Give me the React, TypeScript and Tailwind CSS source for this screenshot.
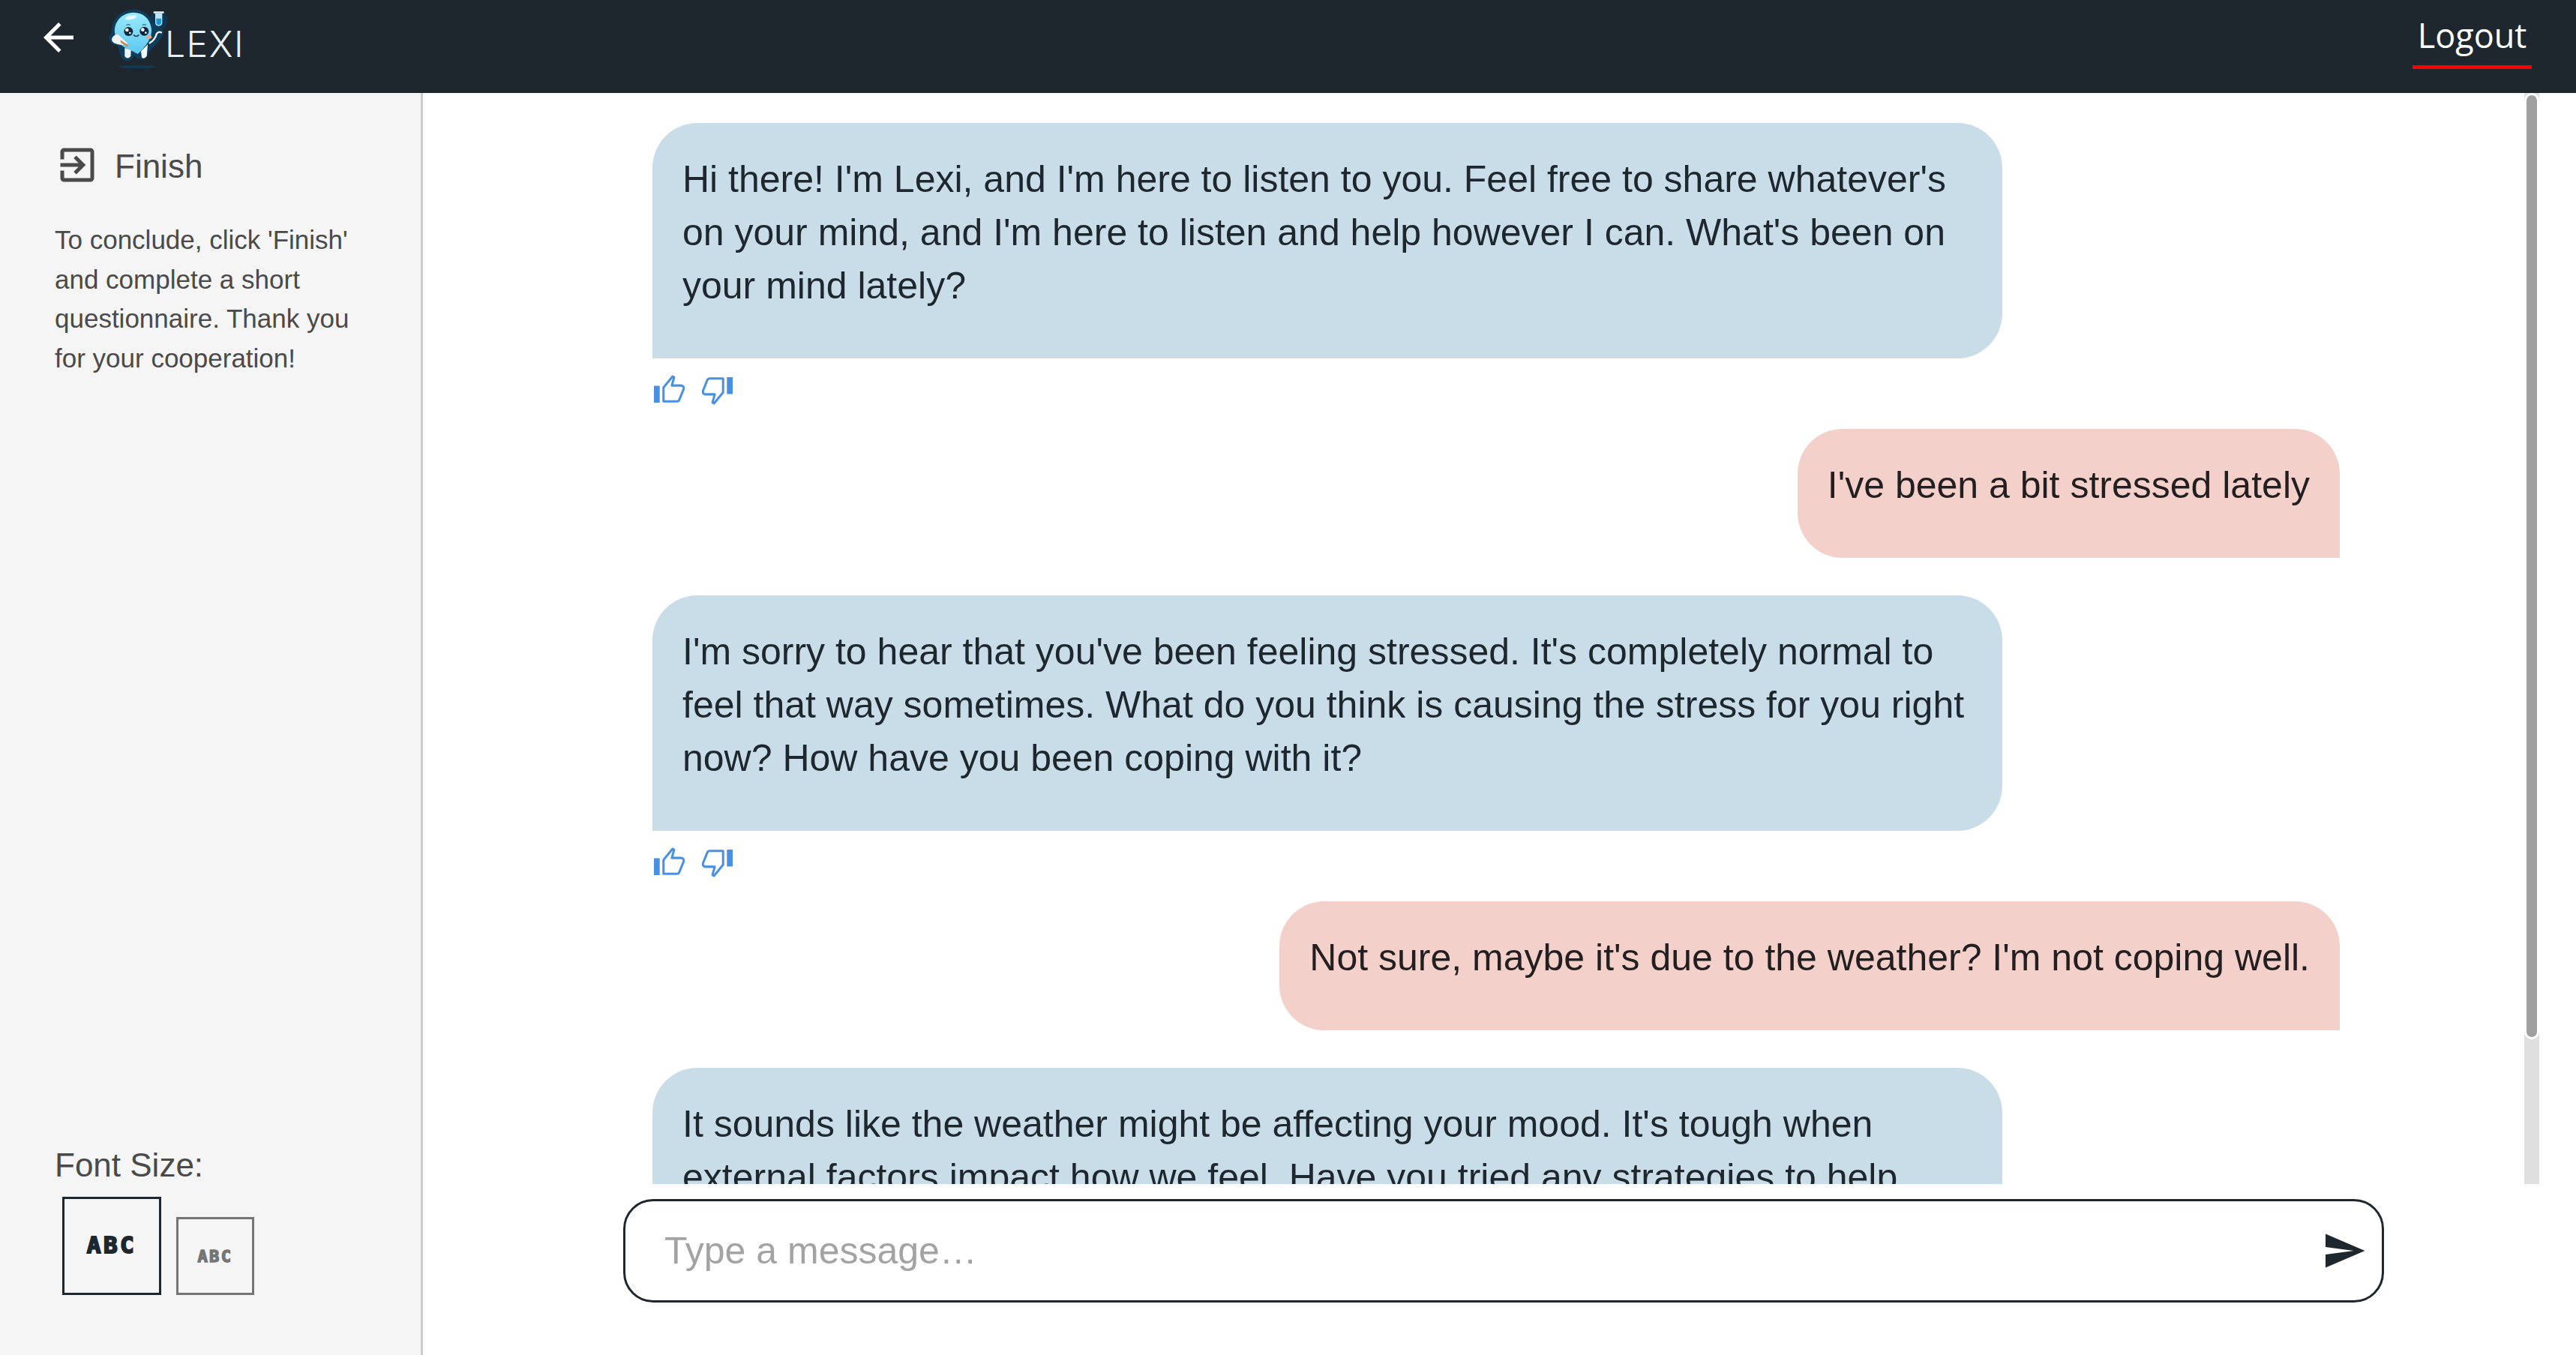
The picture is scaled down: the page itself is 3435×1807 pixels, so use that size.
import React from "react";

const sans = { fontFamily: '"Liberation Sans", Arial, sans-serif' };

function Thumb({ down = false }: { down?: boolean }) {
  return (
    <svg width="41" height="37" viewBox="0 0 122 110" className={down ? "mt-[3px] rotate-180" : ""} fill="none">
      <rect x="0" y="43" width="23" height="67" rx="1" fill="#4a90e2" />
      <path
        d="M38 50 L74 6 L80 10 L71 42 H106 Q120 42 118 56 L100 100 Q98 105 92 105 H38 Z"
        stroke="#4a90e2"
        strokeWidth="9"
        strokeLinejoin="round"
      />
    </svg>
  );
}

function Mascot() {
  return (
    <svg width="84" height="84" viewBox="70 30 252 252" fill="none">
      <defs>
        <linearGradient id="body" x1="0" y1="0" x2="0" y2="1">
          <stop offset="0" stopColor="#9aeafb" />
          <stop offset="1" stopColor="#5cc8ee" />
        </linearGradient>
      </defs>
      <ellipse cx="190" cy="267" rx="78" ry="6" fill="#123a55" />
      <circle cx="276" cy="82" r="36" fill="#0e3650" />
      <path
        d="M175 38 C115 38 84 90 88 130 C70 150 72 175 110 182 C118 190 118 225 135 240 C155 250 170 240 178 222 C190 240 225 245 235 215 C240 195 285 170 296 128 C290 105 260 100 250 85 C235 55 210 38 175 38 Z"
        fill="#0f3d5c"
      />
      <path
        d="M175 50 C125 50 96 92 100 130 C103 165 130 190 165 202 L192 216 C220 190 254 152 246 110 C240 75 215 50 175 50 Z"
        fill="url(#body)"
      />
      <ellipse cx="165" cy="70" rx="24" ry="8" fill="#e6fbff" transform="rotate(-12 165 70)" />
      <path d="M140 192 L165 200 L164 225 Q150 240 140 225 Z" fill="#eef6fb" />
      <path d="M205 205 L232 178 L228 225 Q218 238 208 230 Z" fill="#f4f9fc" />
      <path d="M92 148 Q110 128 122 146 L150 172 Q152 186 138 180 Q105 180 92 168 Q84 158 92 148 Z" fill="#eef3f7" />
      <path d="M122 160 L154 180 L150 188 L124 170 Z" fill="#c98a55" />
      <path d="M240 172 Q262 158 268 134 Q276 124 286 130" stroke="#eef6fb" strokeWidth="7" strokeLinecap="round" />
      <circle cx="155" cy="126" r="18" fill="#10253a" />
      <circle cx="218" cy="125" r="18" fill="#10253a" />
      <circle cx="149" cy="120" r="7" fill="#fff" />
      <circle cx="212" cy="119" r="7" fill="#fff" />
      <circle cx="161" cy="132" r="4" fill="#dff" />
      <circle cx="224" cy="131" r="4" fill="#dff" />
      <path d="M146 100 Q154 96 162 100" stroke="#1d4a66" strokeWidth="3" />
      <path d="M210 100 Q218 96 226 100" stroke="#1d4a66" strokeWidth="3" />
      <path d="M176 140 Q186 150 196 140" stroke="#10253a" strokeWidth="4" strokeLinecap="round" />
      <ellipse cx="237" cy="148" rx="11" ry="8" fill="#f0a48a" />
      <rect x="255" y="46" width="42" height="7" rx="2" fill="#e9f4fa" />
      <path d="M262 53 V90 Q262 104 276 104 Q290 104 290 90 V53" fill="#bfe6f5" />
      <path d="M266 74 H286 V90 Q286 100 276 100 Q266 100 266 90 Z" fill="#1c9ad6" />
    </svg>
  );
}

function Bot({ children }: { children: React.ReactNode }) {
  return (
    <div className="mb-[52px] flex flex-col items-start">
      <div className="w-[1800px] rounded-[60px] rounded-bl-none bg-[#c9dde9] px-[40px] pt-[40px] pb-[61px] text-[#1e272e]">
        {children}
      </div>
      <div className="mt-[22px] mb-[-22px] flex h-[42px] gap-[23px] pl-[2px]">
        <Thumb />
        <Thumb down />
      </div>
    </div>
  );
}

function User({ children }: { children: React.ReactNode }) {
  return (
    <div className="mb-[50px] flex justify-end">
      <div className="max-w-[1800px] rounded-[60px] rounded-br-none bg-[#f4d0cb] px-[40px] pt-[40px] pb-[61px] text-[#231f20]">
        {children}
      </div>
    </div>
  );
}

export default function App() {
  return (
    <div className="flex h-screen flex-col overflow-hidden bg-white" style={sans}>
      <header className="flex h-[124px] shrink-0 items-start justify-between bg-[#1e272e]">
        <div className="flex items-start">
          <svg className="mt-[20px] ml-[48px]" width="60" height="60" viewBox="0 0 24 24" fill="#ffffff">
            <path d="M20 11H7.83l5.59-5.59L12 4l-8 8 8 8 1.41-1.41L7.83 13H20z" />
          </svg>
          <div className="mt-[10px] ml-[35px]">
            <Mascot />
          </div>
          <span
            className="mt-[31px] ml-[-7px] text-[48px] leading-[56px] font-light tracking-[1.5px] text-[#e9f1f8]"
            style={{ fontFamily: '"Inter", sans-serif' }}
          >
            LEXI
          </span>
        </div>
        <div className="mt-[22px] mr-[59px] flex h-[70px] w-[159px] flex-col items-center justify-between border-b-[5px] border-[#ff0000]">
          <span
            className="mt-[-3px] text-[45px] leading-[56px] font-medium text-white"
            style={{ fontFamily: '"Open Sans", sans-serif' }}
          >
            Logout
          </span>
        </div>
      </header>

      <div className="flex min-h-0 flex-1">
        <aside className="flex w-[564px] shrink-0 flex-col border-r-[3px] border-[#cccccc] bg-[#f5f5f5] text-[#4a4a4a]">
          <div className="flex items-center pt-[66px] pl-[73px]">
            <svg width="60" height="60" viewBox="0 0 24 24" fill="#4a4a4a">
              <path d="M10.09 15.59 11.5 17l5-5-5-5-1.41 1.41L12.67 11H3v2h9.67zM19 3H5c-1.11 0-2 .9-2 2v4h2V5h14v14H5v-4H3v4c0 1.1.89 2 2 2h14c1.1 0 2-.9 2-2V5c0-1.1-.9-2-2-2" />
            </svg>
            <span className="relative top-[2px] ml-[20px] text-[44px] leading-[60px]">Finish</span>
          </div>
          <p className="mt-[44px] pl-[73px] text-[35px] leading-[52.7px] whitespace-nowrap">
            To conclude, click 'Finish'
            <br />
            and complete a short
            <br />
            questionnaire. Thank you
            <br />
            for your cooperation!
          </p>
          <div className="mt-auto pb-[80px] pl-[73px]">
            <div className="relative top-[2px] text-[44px] leading-[56px]">Font Size:</div>
            <div className="mt-[16px] ml-[10px] flex items-end gap-[20px]">
              <button
                className="flex h-[131px] w-[132px] items-center justify-center border-[3px] border-[#1e272e] pb-[3px] text-[31px] font-bold tracking-[3.5px] text-[#1e272e] [-webkit-text-stroke:2px_#1e272e]"
                style={{ fontFamily: '"DejaVu Sans Mono", monospace' }}
              >
                ABC
              </button>
              <button
                className="flex h-[104px] w-[104px] items-center justify-center border-[3px] border-[#757575] text-[22px] font-bold tracking-[2.5px] text-[#757575] [-webkit-text-stroke:1.5px_#757575]"
                style={{ fontFamily: '"DejaVu Sans Mono", monospace' }}
              >
                ABC
              </button>
            </div>
          </div>
        </aside>

        <main className="flex min-w-0 flex-1 flex-col text-[50px] leading-[71px]">
          <div className="relative mr-[49px] h-[1455px] shrink-0">
            <div className="h-full overflow-hidden pt-[40px] pr-[266px] pl-[306px]">
              <Bot>
                Hi there! I'm Lexi, and I'm here to listen to you. Feel free to share whatever's on your mind, and I'm here
                to listen and help however I can. What's been on your mind lately?
              </Bot>
              <User>I've been a bit stressed lately</User>
              <Bot>
                I'm sorry to hear that you've been feeling stressed. It's completely normal to feel that way sometimes.
                What do you think is causing the stress for you right now? How have you been coping with it?
              </Bot>
              <User>Not sure, maybe it's due to the weather? I'm not coping well.</User>
              <Bot>
                It sounds like the weather might be affecting your mood. It's tough when external factors impact how we
                feel. Have you tried any strategies to help yourself feel better lately?
              </Bot>
            </div>
            <div className="absolute top-0 right-0 h-full w-[20px] bg-[#dfdfdf]">
              <div className="h-[1262px] rounded-[10px] border-[3px] border-white bg-[#a0a0a0]" />
            </div>
          </div>
          <div className="mt-[20px] ml-[267px] flex h-[138px] w-[2348px] items-center rounded-[40px] border-[3px] border-[#1e272e] pr-[20px] pl-[52px]">
            <input
              className="min-w-0 flex-1 bg-transparent text-[50px] text-[#1e272e] outline-none placeholder:text-[#a3a3a3]"
              placeholder="Type a message…"
            />
            <svg width="60" height="60" viewBox="0 0 24 24" fill="#1e272e">
              <path d="M2.01 21 23 12 2.01 3 2 10l15 2-15 2z" />
            </svg>
          </div>
        </main>
      </div>
    </div>
  );
}
